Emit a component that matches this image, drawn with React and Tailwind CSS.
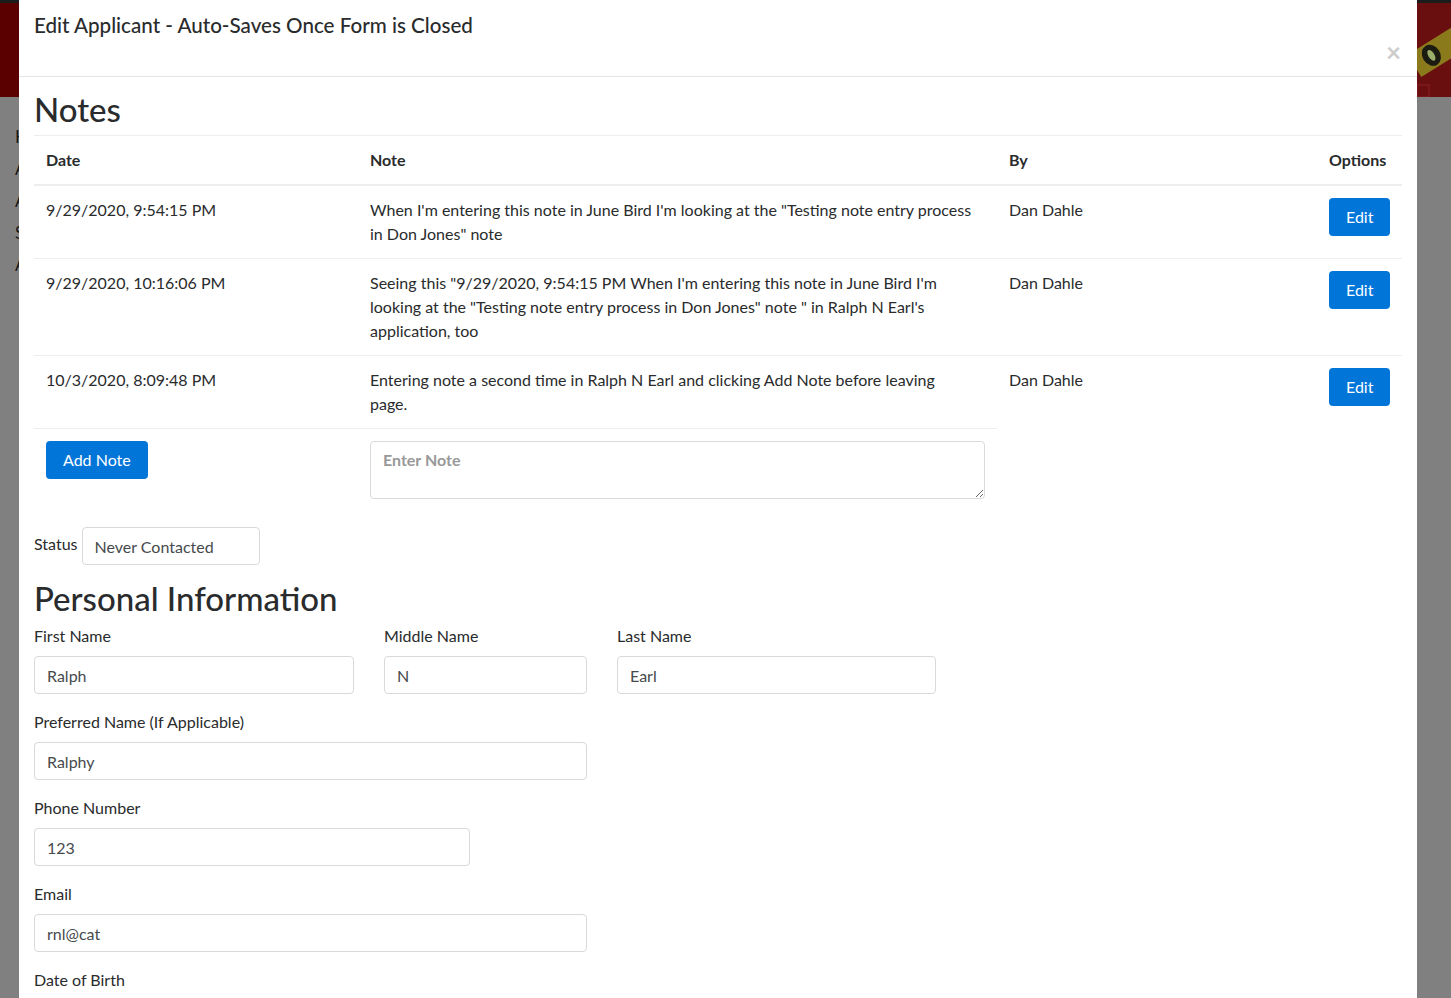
import React from 'react';

const font = { fontFamily: 'Lato, "Noto Sans", sans-serif' };

const notes = [
  {
    date: '9/29/2020, 9:54:15 PM',
    note: ['When I\'m entering this note in June Bird I\'m looking at the "Testing note entry process in Don Jones" note'],
    by: 'Dan Dahle',
  },
  {
    date: '9/29/2020, 10:16:06 PM',
    note: ['Seeing this "9/29/2020, 9:54:15 PM When I\'m entering this note in June Bird I\'m looking at the "Testing note entry process in Don Jones" note " in Ralph N Earl\'s application, too'],
    by: 'Dan Dahle',
  },
  {
    date: '10/3/2020, 8:09:48 PM',
    note: ['Entering note a second time in Ralph N Earl and clicking Add Note before leaving', 'page.'],
    by: 'Dan Dahle',
  },
];

function Field({ label, value, width }) {
  return (
    <div className="mb-4">
      <label className="block mb-2 leading-6">{label}</label>
      <input
        readOnly
        value={value}
        className={`${width} h-[38px] block px-3 border border-[#d9d9d9] rounded text-[#464a4c] bg-white outline-none`}
      />
    </div>
  );
}

function LevelPicture() {
  return (
    <svg width="34" height="94" viewBox="0 0 34 94">
      <rect width="34" height="94" fill="#6a0f10" />
      <g transform="rotate(-32 20 50)">
        <rect x="-6" y="36" width="60" height="26" fill="#8a7a1c" />
        <ellipse cx="14" cy="49" rx="9" ry="11" fill="#1b1b12" />
        <ellipse cx="14" cy="49" rx="3" ry="6" fill="#9dad6a" />
      </g>
      <rect x="0" y="82" width="12" height="12" fill="none" stroke="#8a2020" strokeWidth="1" />
    </svg>
  );
}

export default function App() {
  return (
    <div className="w-[1451px] h-[998px] overflow-hidden flex bg-[#808080] text-[#292b2c]" style={font}>
      {/* dimmed page behind, left */}
      <div className="w-[19px] shrink-0 flex flex-col overflow-hidden">
        <div className="h-[3px] bg-[#1c1c1c]" />
        <div className="h-[94px] bg-[#5a0000]" />
        <div className="pl-[15px] pt-[28px] flex flex-col gap-[8px] text-[#161616] text-[17px] leading-[24px] font-normal">
          <span>H</span>
          <span>A</span>
          <span>A</span>
          <span>S</span>
          <span>A</span>
        </div>
      </div>

      {/* modal */}
      <div className="w-[1398px] shrink-0 bg-white text-base">
        <div className="h-[77px] border-b border-[#e5e5e5] px-[15px] flex justify-between items-start">
          <h5 className="text-[20.6px] leading-[30px] mt-[10px] font-medium text-[#292b2c]">
            Edit Applicant - Auto-Saves Once Form is Closed
          </h5>
          <span className="mt-[37px] mr-[1px] text-[26px] leading-[30px] font-bold text-[#cccccc]">×</span>
        </div>

        <div className="px-[15px] pt-[15px]">
          <h2 className="text-[33px] leading-[35px] font-medium mb-2">Notes</h2>

          <table className="w-[1368px] table-fixed border-collapse mb-4">
            <colgroup>
              <col className="w-[324px]" />
              <col className="w-[639px]" />
              <col className="w-[320px]" />
              <col className="w-[85px]" />
            </colgroup>
            <thead>
              <tr>
                <th className="text-left font-bold p-3 leading-6 border-t border-[#eceeef] border-b-2 align-bottom">Date</th>
                <th className="text-left font-bold p-3 leading-6 border-t border-[#eceeef] border-b-2 align-bottom">Note</th>
                <th className="text-left font-bold p-3 leading-6 border-t border-[#eceeef] border-b-2 align-bottom">By</th>
                <th className="text-left font-bold p-3 leading-6 border-t border-[#eceeef] border-b-2 align-bottom">Options</th>
              </tr>
            </thead>
            <tbody>
              {notes.map((n) => (
                <tr key={n.date}>
                  <td className="p-3 leading-6 align-top border-t border-[#eceeef]">{n.date}</td>
                  <td className="p-3 leading-6 align-top border-t border-[#eceeef]">
                    {n.note.map((line, i) => (
                      <span key={i} className="block">{line}</span>
                    ))}
                  </td>
                  <td className="p-3 leading-6 align-top border-t border-[#eceeef]">{n.by}</td>
                  <td className="p-3 leading-6 align-top border-t border-[#eceeef]">
                    <button className="h-[38px] px-[17px] rounded bg-[#0275d8] text-white leading-5">Edit</button>
                  </td>
                </tr>
              ))}
              <tr>
                <td className="p-3 align-top border-t border-[#eceeef]">
                  <button className="h-[38px] px-[17px] rounded bg-[#0275d8] text-white leading-5">Add Note</button>
                </td>
                <td className="p-3 align-top border-t border-[#eceeef]">
                  <textarea
                    placeholder="Enter Note"
                    className="block w-full h-[58px] px-3 pt-[6px] leading-6 border border-[#d9d9d9] rounded outline-none placeholder:text-[#999999] placeholder:font-bold"
                  />
                </td>
              </tr>
            </tbody>
          </table>

          <div className="flex items-center gap-1">
            <span className="leading-6 -mt-1">Status</span>
            <input
              readOnly
              value="Never Contacted"
              className="w-[178px] h-[38px] px-3 border border-[#d9d9d9] rounded text-[#464a4c] outline-none"
            />
          </div>

          <h2 className="text-[33px] leading-[35px] font-medium mt-4 mb-2">Personal Information</h2>

          <div className="flex gap-[30px]">
            <Field label="First Name" value="Ralph" width="w-[320px]" />
            <Field label="Middle Name" value="N" width="w-[203px]" />
            <Field label="Last Name" value="Earl" width="w-[319px]" />
          </div>
          <Field label="Preferred Name (If Applicable)" value="Ralphy" width="w-[553px]" />
          <Field label="Phone Number" value="123" width="w-[436px]" />
          <Field label="Email" value="rnl@cat" width="w-[553px]" />
          <label className="block leading-6">Date of Birth</label>
        </div>
      </div>

      {/* dimmed page behind, right */}
      <div className="w-[34px] shrink-0 flex flex-col">
        <div className="h-[3px] bg-[#1c1c1c]" />
        <LevelPicture />
      </div>
    </div>
  );
}
